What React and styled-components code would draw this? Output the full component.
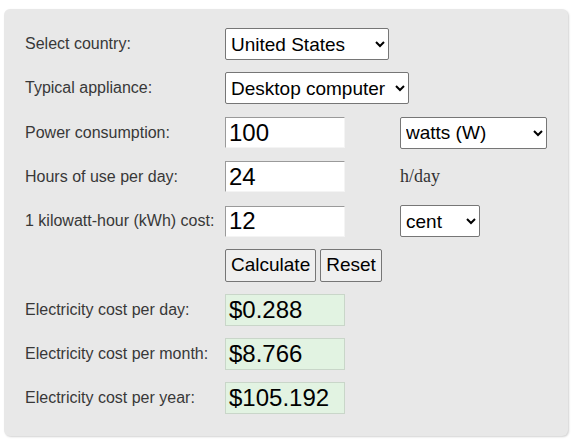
import { Fragment } from 'react';
import styled, { createGlobalStyle } from 'styled-components';

const GlobalStyle = createGlobalStyle`
    body {
        margin: 0;
        background: #ffffff;
        font-family: "Liberation Sans", Arial, sans-serif;
    }
`;

const Page = styled.div`
    padding: 9px 8px 12px 4px;
`;

const Panel = styled.div`
    background: #e8e8e8;
    border-radius: 6px;
    box-shadow: 1px 1px 2px rgba(0, 0, 0, 0.18);
    padding: 19px 21px 22px 21px;
    display: grid;
    grid-template-columns: 200px 175px 1fr;
    grid-auto-rows: 32px;
    row-gap: 12.25px;
    align-items: center;
`;

const Label = styled.div`
    font-size: 16px;
    color: #383838;
    white-space: nowrap;
`;

const Select = styled.select`
    font-family: "Liberation Sans", Arial, sans-serif;
    font-size: 19px;
    color: #000000;
    background: #ffffff;
    border: 1px solid #767676;
    border-radius: 2px;
    height: 32px;
    width: ${p => p.$width}px;
    padding: 0 2px 0 1px;
    box-sizing: border-box;
`;

const NumberInput = styled.input`
    font-family: "Liberation Sans", Arial, sans-serif;
    font-size: 24px;
    color: #000000;
    background: #ffffff;
    border: 1px solid;
    border-color: #9a9a9a #f4f4f4 #f4f4f4 #9a9a9a;
    height: 31px;
    width: 120px;
    padding: 0 3px;
    box-sizing: border-box;
    outline: none;
`;

const Unit = styled.div`
    font-family: "Liberation Serif", "Times New Roman", serif;
    font-size: 18px;
    color: #333333;
`;

const Buttons = styled.div`
    display: flex;
    gap: 4px;
    grid-column: 2;
`;

const Button = styled.button`
    font-family: "Liberation Sans", Arial, sans-serif;
    font-size: 19px;
    color: #000000;
    background: #efefef;
    border: 1px solid #767676;
    border-radius: 2px;
    height: 33px;
    padding: 0 5px;
`;

const Result = styled.div`
    font-size: 24px;
    color: #000000;
    background: #e2f3e2;
    border: 1px solid #c9d6c9;
    height: 32px;
    width: 120px;
    box-sizing: border-box;
    padding: 0 3px;
    display: flex;
    align-items: center;
`;

const Empty = styled.div``;

const results = [
    ['Electricity cost per day:', '$0.288'],
    ['Electricity cost per month:', '$8.766'],
    ['Electricity cost per year:', '$105.192'],
];

export default function App() {
    return (
        <Page>
            <GlobalStyle />
            <Panel>
                <Label>Select country:</Label>
                <Select $width={164} defaultValue="us">
                    <option value="us">United States</option>
                </Select>
                <Empty />

                <Label>Typical appliance:</Label>
                <Select $width={184} defaultValue="desktop">
                    <option value="desktop">Desktop computer</option>
                </Select>
                <Empty />

                <Label>Power consumption:</Label>
                <NumberInput defaultValue="100" />
                <Select $width={147} defaultValue="w">
                    <option value="w">watts (W)</option>
                </Select>

                <Label>Hours of use per day:</Label>
                <NumberInput defaultValue="24" />
                <Unit>h/day</Unit>

                <Label>1 kilowatt-hour (kWh) cost:</Label>
                <NumberInput defaultValue="12" />
                <Select $width={80} defaultValue="cent">
                    <option value="cent">cent</option>
                </Select>

                <Empty />
                <Buttons>
                    <Button>Calculate</Button>
                    <Button>Reset</Button>
                </Buttons>
                <Empty />

                {results.map(([label, value]) => (
                    <Fragment key={label}>
                        <Label>{label}</Label>
                        <Result>{value}</Result>
                        <Empty />
                    </Fragment>
                ))}
            </Panel>
        </Page>
    );
}
